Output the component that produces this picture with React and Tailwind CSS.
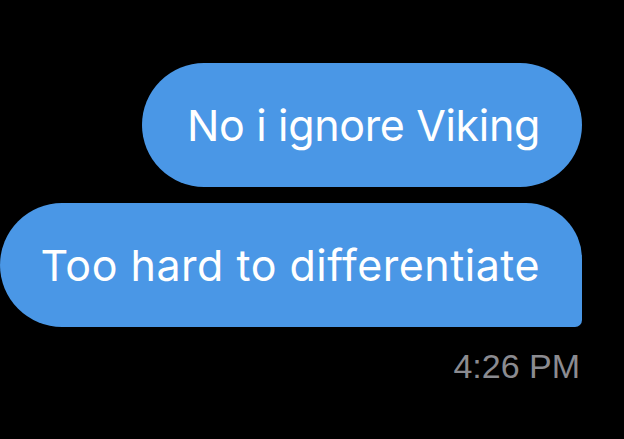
const Bubble = (props) => {
    const { children, tail } = props
    return (
        <div className={`h-[124px] flex items-center pr-[42px] bg-[#4a97e6] text-white text-[43px] [font-variant-ligatures:none] ${tail ? "pl-[40px] tracking-[0.5px] rounded-l-[62px] rounded-tr-[56px] rounded-br-[7px]" : "pl-[45px] tracking-[-0.35px] rounded-[62px]"}`}>
            {children}
        </div>
    )
}

export default function App() {
    return (
        <div className="w-[624px] h-[439px] bg-black overflow-hidden" style={{ fontFamily: "Inter, 'Noto Sans', sans-serif" }}>
            <div className="flex flex-col items-end pt-[63px] pr-[42px]">
                <Bubble>No i ignore Viking</Bubble>
                <div className="mt-[16px]">
                    <Bubble tail>Too hard to differentiate</Bubble>
                </div>
                <div className="mt-[14px] pr-[2px] text-[34px] text-[#8b8b90]" style={{ fontFamily: "'Liberation Sans', Arial, sans-serif" }}>4:26 PM</div>
            </div>
        </div>
    )
}
